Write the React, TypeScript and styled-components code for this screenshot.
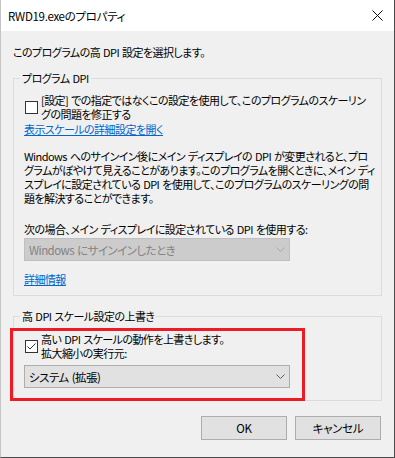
import React from 'react'
import styled, { createGlobalStyle } from 'styled-components'

const GlobalStyles = createGlobalStyle`
  html, body {
    margin: 0;
    padding: 0;
    background: #f0f0f0;
  }
  body {
    font-family: "Noto Sans CJK JP", "Noto Sans", sans-serif;
    font-size: 11px;
    color: #000;
  }
`

const Window = styled.div`
  width: 395px;
  height: 458px;
  box-sizing: border-box;
  display: flex;
  flex-direction: column;
  background: #f0f0f0;
  border-left: 1px solid #c4c4c4;
  border-right: 1px solid #4a4a4a;
  border-bottom: 1px solid #4a4a4a;
  font-feature-settings: "palt";
  letter-spacing: -0.55px;
  word-spacing: 1px;
`

const TitleBar = styled.div`
  height: 31px;
  flex: none;
  display: flex;
  align-items: center;
  justify-content: space-between;
  background: #fff;
  padding: 0 11px 0 7px;
  font-size: 11.5px;
  letter-spacing: -0.3px;
  line-height: 14px;
`

const CloseIcon = () => (
  <svg width="11" height="11" viewBox="0 0 11 11">
    <path d="M0.5 0.5 L10.5 10.5 M10.5 0.5 L0.5 10.5" stroke="#111" strokeWidth="1" fill="none" />
  </svg>
)

const Body = styled.div`
  flex: 1;
  display: flex;
  flex-direction: column;
  padding: 14px 12px 0 12px;
`

const Text = styled.div<{ $top?: number }>`
  line-height: 14px;
  white-space: nowrap;
  margin-top: ${(p) => p.$top ?? 0}px;
`

const Group = styled.fieldset<{ $top: number; $bottom: number }>`
  margin: ${(p) => p.$top}px 0 0 0;
  padding: 0 10px ${(p) => p.$bottom}px 10px;
  border: 1px solid #dcdcdc;
  min-width: 0;
`

const Legend = styled.legend`
  padding: 0 2px;
  margin-left: -4px;
  line-height: 13px;
  white-space: nowrap;
`

const CheckRow = styled.div<{ $top?: number }>`
  display: flex;
  align-items: center;
  gap: 3px;
  margin-top: ${(p) => p.$top ?? 0}px;
`

const CheckBox = styled.span`
  width: 13px;
  height: 13px;
  box-sizing: border-box;
  flex: none;
  border: 1px solid #333;
  background: #fff;
  margin-left: 1px;
  display: flex;
  align-items: center;
  justify-content: center;
`

const Link = styled.a<{ $top?: number }>`
  display: block;
  width: max-content;
  color: #0066cc;
  text-decoration: underline;
  line-height: 14px;
  margin-top: ${(p) => p.$top ?? 0}px;
  cursor: pointer;
`

const Select = styled.div<{ $disabled?: boolean; $top: number }>`
  width: 266px;
  height: 23px;
  box-sizing: border-box;
  margin-top: ${(p) => p.$top}px;
  display: flex;
  align-items: center;
  justify-content: space-between;
  padding: 0 4px 0 4px;
  background: ${(p) => (p.$disabled ? '#cccccc' : '#e1e1e1')};
  border: 1px solid ${(p) => (p.$disabled ? '#bfbfbf' : '#adadad')};
  color: ${(p) => (p.$disabled ? '#838383' : '#000')};
  white-space: nowrap;
  line-height: 14px;
  font-size: 11.5px;
`

const Chevron = ({ color }: { color: string }) => (
  <svg width="9" height="5" viewBox="0 0 9 5">
    <path d="M0.5 0.5 L4.5 4.5 L8.5 0.5" stroke={color} strokeWidth="1" fill="none" />
  </svg>
)

const Highlight = styled.div`
  position: relative;
  z-index: 1;
  width: 295px;
  box-sizing: border-box;
  margin: 5px 0 -1px -14px;
  padding: 1px 0 10px 11px;
  border: 3px solid #ed1c24;
`

const ButtonRow = styled.div`
  display: flex;
  justify-content: flex-end;
  gap: 8px;
  margin-top: 15px;
  padding-right: 1px;
`

const Button = styled.button`
  width: 86px;
  height: 24px;
  box-sizing: border-box;
  background: #e1e1e1;
  border: 1px solid #adadad;
  font: inherit;
  font-size: 11.5px;
  letter-spacing: -0.3px;
  color: #000;
  padding: 0;
`

export default function App() {
  return (
    <>
      <GlobalStyles />
      <Window>
        <TitleBar>
          <span>RWD19.exeのプロパティ</span>
          <CloseIcon />
        </TitleBar>
        <Body>
          <Text>このプログラムの高 DPI 設定を選択します。</Text>

          <Group $top={13} $bottom={9}>
            <Legend>プログラム DPI</Legend>
            <CheckRow $top={8}>
              <CheckBox />
              <Text>
                [設定] での指定ではなくこの設定を使用して、このプログラムのスケーリン
                <br />
                グの問題を修正する
              </Text>
            </CheckRow>
            <Link $top={1}>表示スケールの詳細設定を開く</Link>
            <Text $top={13}>
              Windows へのサインイン後にメイン ディスプレイの DPI が変更されると、プロ
              <br />
              グラムがぼやけて見えることがあります。このプログラムを開くときに、メイン ディ
              <br />
              スプレイに設定されている DPI を使用して、このプログラムのスケーリングの問
              <br />
              題を解決することができます。
            </Text>
            <Text $top={17}>次の場合、メイン ディスプレイに設定されている DPI を使用する:</Text>
            <Select $disabled $top={2}>
              <span>Windows にサインインしたとき</span>
              <Chevron color="#a6a6a6" />
            </Select>
            <Link $top={11}>詳細情報</Link>
          </Group>

          <Group $top={14} $bottom={0}>
            <Legend>高 DPI スケール設定の上書き</Legend>
            <Highlight>
              <CheckRow>
                <CheckBox>
                  <svg width="11" height="11" viewBox="0 0 11 11">
                    <path d="M1.5 5.5 L4 8 L9.5 2.5" stroke="#333" strokeWidth="1" fill="none" />
                  </svg>
                </CheckBox>
                <Text>
                  高い DPI スケールの動作を上書きします。
                  <br />
                  拡大縮小の実行元:
                </Text>
              </CheckRow>
              <Select $top={5}>
                <span>システム (拡張)</span>
                <Chevron color="#606060" />
              </Select>
            </Highlight>
          </Group>

          <ButtonRow>
            <Button>OK</Button>
            <Button>キャンセル</Button>
          </ButtonRow>
        </Body>
      </Window>
    </>
  )
}
